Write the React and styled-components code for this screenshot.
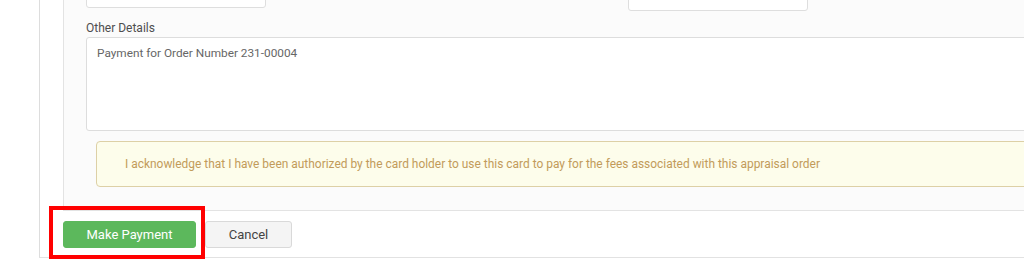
import styled, { createGlobalStyle } from "styled-components";

const GlobalStyle = createGlobalStyle`
  html, body {
    margin: 0;
    padding: 0;
    background: #ffffff;
    overflow: hidden;
  }
  body {
    font-family: Roboto, "Liberation Sans", sans-serif;
  }
`;

const Page = styled.div`
  position: relative;
  width: 1024px;
  height: 265px;
  overflow: hidden;
`;

const OuterPanel = styled.div`
  margin-left: 39px;
  width: 1100px;
  border-left: 1px solid #dddddd;
  border-bottom: 1px solid #e2e2e2;
  padding-bottom: 9px;
`;

const InnerPanel = styled.div`
  margin-left: 23px;
  border-left: 1px solid #e3e3e3;
  border-bottom: 1px solid #e3e3e3;
  background: #fbfbfb;
  padding: 0 0 23px 22px;
`;

const FieldRow = styled.div`
  display: grid;
  grid-template-columns: 542px 180px;
  margin-top: -24px;
  align-items: start;
`;

const Input = styled.div`
  width: 180px;
  height: ${(p) => p.h}px;
  box-sizing: border-box;
  border: 1px solid #dedede;
  border-radius: 3px;
  background: #ffffff;
`;

const Label = styled.div`
  margin-top: 9px;
  font-size: 12px;
  font-weight: 400;
  color: #4e4e4e;
  line-height: 16px;
`;

const TextArea = styled.div`
  margin-top: 1px;
  width: 1000px;
  height: 94px;
  box-sizing: border-box;
  border: 1px solid #dddddd;
  border-radius: 3px;
  background: #ffffff;
  padding: 8px 10px;
  font-size: 11.8px;
  color: #666666;
`;

const Alert = styled.div`
  margin: 10px 0 0 10px;
  height: 46px;
  box-sizing: border-box;
  border: 1px solid #ddd0a6;
  border-radius: 4px;
  background: #fdfdeb;
  display: flex;
  align-items: center;
  padding-left: 28px;
  font-size: 11.95px;
  color: #c29b5a;
`;

const ButtonRow = styled.div`
  display: flex;
  gap: 9px;
  margin: 10px 0 0 23px;
`;

const Button = styled.button`
  height: 27px;
  width: ${(p) => p.w}px;
  box-sizing: border-box;
  border-radius: 3px;
  font-family: Roboto, "Liberation Sans", sans-serif;
  font-size: 13px;
  padding: 0;
  cursor: pointer;
  border: 1px solid ${(p) => (p.primary ? "#5cb85c" : "#d9d9d9")};
  background: ${(p) => (p.primary ? "#5cb85c" : "#f4f4f4")};
  color: ${(p) => (p.primary ? "#ffffff" : "#444444")};
`;

const Highlight = styled.div`
  position: absolute;
  left: 49px;
  top: 206px;
  width: 156px;
  height: 53px;
  box-sizing: border-box;
  border: 4px solid #ff0000;
  pointer-events: none;
`;

export default function App() {
  return (
    <Page>
      <GlobalStyle />
      <OuterPanel>
        <InnerPanel>
          <FieldRow>
            <Input h={32} />
            <Input h={35} />
          </FieldRow>
          <Label>Other Details</Label>
          <TextArea>Payment for Order Number 231-00004</TextArea>
          <Alert>
            I acknowledge that I have been authorized by the card holder to use
            this card to pay for the fees associated with this appraisal order
          </Alert>
        </InnerPanel>
        <ButtonRow>
          <Button primary w={133}>
            Make Payment
          </Button>
          <Button w={87}>Cancel</Button>
        </ButtonRow>
      </OuterPanel>
      <Highlight />
    </Page>
  );
}
